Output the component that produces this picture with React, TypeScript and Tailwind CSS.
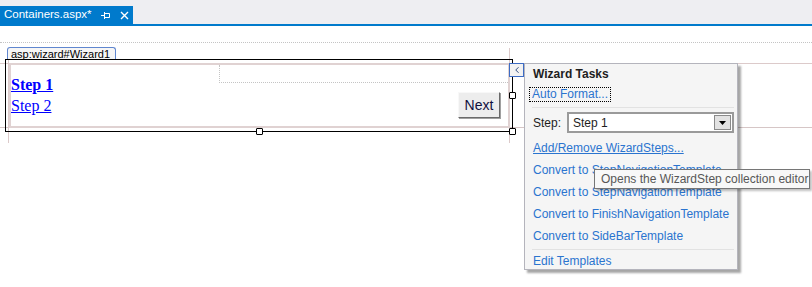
import { ChevronLeft } from 'lucide-react';

const links = [
  'Convert to StepNavigationTemplate',
  'Convert to StepNavigationTemplate',
  'Convert to FinishNavigationTemplate',
  'Convert to SideBarTemplate',
];

function Handle({ x, y }: { x: number; y: number }) {
  // designer grab handle, centred on (x, y)
  return (
    <div
      className="absolute h-[7px] w-[7px] rounded-[1px] border border-black bg-white"
      style={{ left: x - 3, top: y - 3 }}
    />
  );
}

function TabStrip() {
  return (
    <div className="bg-[#eeeef2]">
      <div className="flex h-[24px] items-end pt-[6px]">
        <div className="flex h-[18px] w-[133px] items-center bg-[#007acc] pl-[4px] text-[11.5px] text-white">
          <span>Containers.aspx*</span>
          <svg width="9" height="8" viewBox="0 0 9 8" className="ml-[9px]" fill="none" stroke="white" strokeWidth="1">
            <path d="M0 4.5H3M3.5 1V8M3.5 2.5H8.5V6.5H3.5" />
          </svg>
          <svg width="9" height="9" viewBox="0 0 9 9" className="ml-[10px]" stroke="white" strokeWidth="1.4">
            <path d="M1 1L8 8M8 1L1 8" />
          </svg>
        </div>
      </div>
      <div className="h-[2px] bg-[#007acc]" />
    </div>
  );
}

function WizardControl() {
  return (
    <>
      {/* design-time guides */}
      <div className="absolute left-0 right-0 top-[42px] border-t border-dotted border-[#c4c4c4]" />
      <div className="absolute left-0 right-0 top-[63px] border-t border-[#dccaca]" />
      <div className="absolute left-0 right-0 top-[127px] border-t border-[#d6c6c6]" />
      <div className="absolute left-[8px] top-[48px] h-[95px] border-l border-[#dccaca]" />
      <div className="absolute left-[509px] top-[48px] h-[95px] border-l border-[#dccaca]" />

      <div className="absolute left-[7px] top-[47px] flex h-[13px] w-[109px] items-center rounded-t-[3px] border border-b-0 border-[#5f86cf] bg-[#f6f6f6] pl-[3px] font-['Liberation_Sans',Arial,sans-serif] text-[11px] leading-none text-black">
        asp:wizard#Wizard1
      </div>

      <div className="absolute left-[5px] top-[59px] h-[73px] w-[508px] border border-black">
        <div className="ml-[3px] mt-[3px] flex h-[65px] w-[501px] border-[2px] border-[#e0d2d2] bg-white">
          <div className="flex w-[208px] flex-col pt-[9px] font-['Liberation_Serif','Times_New_Roman',serif] text-[16px] leading-[21px] text-[#0000ff]">
            <span className="font-bold underline">Step 1</span>
            <span className="underline">Step 2</span>
          </div>
          <div className="flex flex-1 flex-col">
            <div className="h-[18px] border border-dotted border-[#c4c4c4] border-r-0 border-t-0" />
            <div className="flex flex-1 items-start justify-end pr-[8px] pt-[9px]">
              <div className="flex h-[26px] w-[42px] items-center justify-center border border-b-[#6a6a6a] border-l-[#f8f8f8] border-r-[#6a6a6a] border-t-[#f8f8f8] bg-[#ededed] font-['Liberation_Sans',Arial,sans-serif] text-[14px] text-[#101040] shadow-[1px_1px_0_#a0a0a0]">
                Next
              </div>
            </div>
          </div>
        </div>
      </div>

      <Handle x={259} y={131} />
      <Handle x={512} y={131} />
      <Handle x={512} y={95} />

      <div className="absolute left-[509px] top-[63px] flex h-[14px] w-[15px] items-center justify-center border border-[#3d6cc4] bg-[#f2f2f2]">
        <ChevronLeft size={10} strokeWidth={2.2} color="#1c3d78" />
      </div>
    </>
  );
}

function TasksPanel() {
  return (
    <div className="absolute left-[524px] top-[63px] flex h-[207px] w-[214px] flex-col border border-[#b4b4bc] bg-[#f5f5f5] pl-[7px] pr-[3px] font-['Liberation_Sans',Arial,sans-serif] text-[12px] shadow-[3px_3px_2px_rgba(0,0,0,0.35)]">
      <div className="flex h-[20px] items-center pl-[1px] pt-[1px] font-bold text-[#1e1e1e]">Wizard Tasks</div>
      <div className="mt-[4px] flex">
        <span className="-ml-[3px] border border-dotted border-black px-[2px] leading-[13px] text-[#2a74cf]">
          Auto Format...
        </span>
      </div>
      <div className="mt-[5px] h-px bg-[#e2e2e2]" />
      <div className="mt-[4px] flex h-[21px] items-center">
        <span className="w-[35px] pl-[1px] text-[#1e1e1e]">Step:</span>
        <div className="flex h-[21px] flex-1 items-center border-[2px] border-[#9a9a9a] bg-white pl-[4px] text-[#1e1e1e]">
          <span className="flex-1">Step 1</span>
          <div className="mr-[1px] flex h-[15px] w-[17px] items-center justify-center border border-[#8a8a8a] bg-[#e2e2e2]">
            <svg width="7" height="4" viewBox="0 0 7 4"><path d="M0 0H7L3.5 4Z" fill="#000" /></svg>
          </div>
        </div>
      </div>
      <div className="mt-[7px] flex h-[16px] items-center pl-[1px] text-[#2a74cf] underline">Add/Remove WizardSteps...</div>
      {links.map((l, i) => (
        <div key={i} className="mt-[6px] flex h-[16px] items-center pl-[1px] text-[#2a74cf]">
          {l}
        </div>
      ))}
      <div className="mt-[5px] h-px bg-[#e2e2e2]" />
      <div className="mt-[3px] flex h-[16px] items-center pl-[1px] text-[#2a74cf]">Edit Templates</div>
    </div>
  );
}

export default function App() {
  return (
    <div className="relative h-[287px] w-[812px] overflow-hidden bg-white font-['Liberation_Sans',Arial,sans-serif]">
      <TabStrip />
      <WizardControl />
      <TasksPanel />
      <div className="absolute left-[594px] top-[169px] flex h-[20px] w-[216px] items-center border border-[#767676] bg-[#f8f8f8] pl-[6px] text-[12px] text-[#575757] shadow-[2px_2px_2px_rgba(0,0,0,0.25)]">
        Opens the WizardStep collection editor
      </div>
    </div>
  );
}
